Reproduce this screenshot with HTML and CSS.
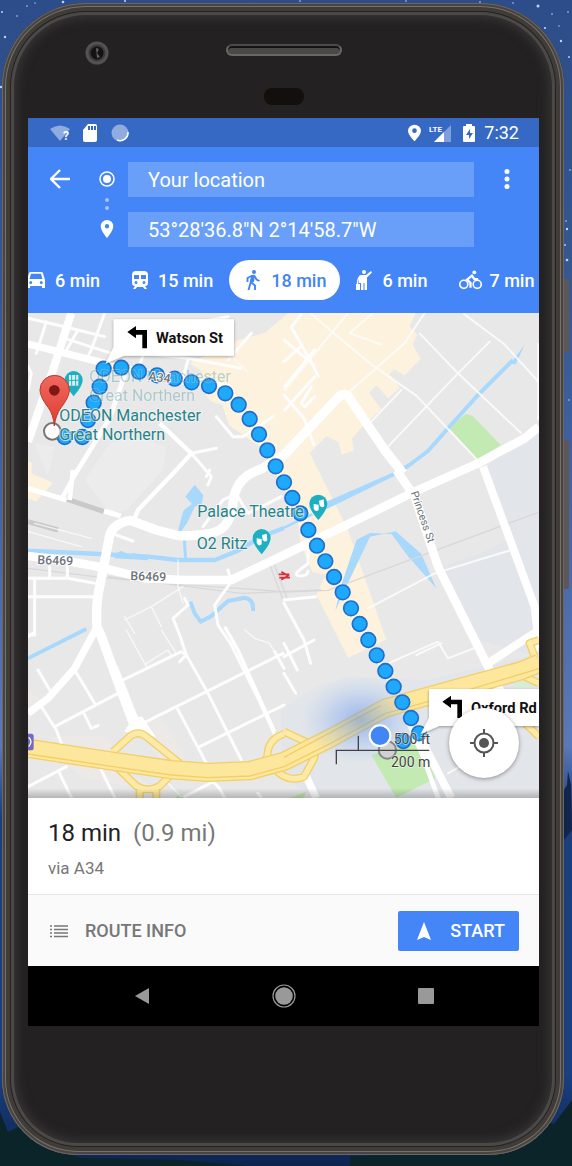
FILE: index.html
```html
<!DOCTYPE html>
<html lang="en">
<head>
<meta charset="utf-8">
<meta name="viewport" content="width=device-width, initial-scale=1">
<title>Directions</title>
<link rel="stylesheet" href="styles.css">
</head>
<body>
<div class="desktop">
  <svg class="stars" viewBox="0 0 572 1166" preserveAspectRatio="none" aria-hidden="true">
    <g fill="#c3d4f5">
      <circle cx="63" cy="2" r="1.3"/><circle cx="5" cy="37" r="1.2"/><circle cx="2" cy="12" r="1"/><circle cx="17" cy="16" r=".8"/><circle cx="1" cy="87" r="1.2"/><circle cx="27" cy="6" r=".8"/><circle cx="35" cy="3" r=".7"/><circle cx="125" cy="1" r="1"/><circle cx="300" cy="1" r=".8"/><circle cx="406" cy="1" r=".8"/><circle cx="480" cy="2" r=".8"/><circle cx="538" cy="6" r="1.5"/><circle cx="513" cy="3" r=".8"/><circle cx="545" cy="28" r="1.1"/><circle cx="552" cy="14" r=".8"/><circle cx="561" cy="41" r="1.2"/><circle cx="568" cy="12" r=".8"/><circle cx="559" cy="26" r=".7"/><circle cx="569" cy="57" r=".9"/><circle cx="567" cy="229" r="1.2"/><circle cx="567" cy="260" r="1.3"/><circle cx="566" cy="221" r=".8"/><circle cx="565" cy="245" r=".9"/><circle cx="570" cy="170" r=".8"/><circle cx="569" cy="400" r=".8"/>
    </g>
    <path d="M564 790l3-5 1-14 3 14 1 45-8 10z" fill="#12264c"/>
    <path d="M0 1112l8 20 12-6 20 18 40 14 100 2 70 6H0zM350 1156l120-2 50-18 20-16 14 4 18-24v66H350z" fill="#0b2429"/>
  </svg>
  <i class="key key-power"></i><i class="key key-volume"></i>
  <div class="phone">
    <div class="hardware" aria-hidden="true">
      <svg class="lens" viewBox="0 0 24 24"><circle cx="12" cy="12" r="11.5" fill="#555352"/><circle cx="12" cy="12" r="8.5" fill="#3b3939"/><circle cx="12" cy="12" r="6.5" fill="#141313"/><path d="M11 7l3 1-2 4 3 4-3 1z" fill="#646261"/></svg>
      <span class="speaker"></span>
      <span class="sensor"></span>
    </div>
    <main class="screen">
      <div class="status">
        <svg class="s-wifi" viewBox="0 0 22 18"><path d="M0 5Q10-2 20 5L10 17z" fill="#8fabdf"/><text x="13" y="16" class="q">?</text></svg>
        <svg class="s-sd" viewBox="0 0 14 18"><path d="M5 0h7q2 0 2 2v14q0 2-2 2H2q-2 0-2-2V6z" fill="#fff"/><path d="M5 2h2v4H5zm3 0h2v4H8zm3 0h2v4h-2z" fill="#3669c4"/></svg>
        <svg class="s-sync" viewBox="0 0 18 18"><circle cx="9" cy="9" r="8.5" fill="#8fabdf"/><path d="M17 8a8 8 0 0 1-11 8" fill="none" stroke="#fff" stroke-width="1.500"/></svg>
        <span class="fill"></span>
        <svg class="s-pin" viewBox="0 0 14 18"><path fill-rule="evenodd" d="M7 0a7 6.600 0 0 1 7 6.600C14 11 7 18 7 18S0 11 0 6.600A7 6.600 0 0 1 7 0zm0 4a2.500 2.500 0 1 0 0 5 2.500 2.500 0 0 0 0-5z" fill="#fff"/></svg>
        <svg class="s-lte" viewBox="0 0 23 18"><path d="M22 1v17H5z" fill="#7f9edb"/><path d="M15 8v10H5z" fill="#fff"/><text x="0" y="8" class="lte">LTE</text></svg>
        <svg class="s-bat" viewBox="0 0 12 18"><path d="M3 0h6v2h2q1 0 1 1v14q0 1-1 1H1q-1 0-1-1V3q0-1 1-1h2z" fill="#fff"/><path d="M7 5l-4 6h3v4l4-6H7z" fill="#3669c4"/></svg>
        <time>7:32</time>
      </div>
      <header class="header">
        <form class="route">
          <button type="button" class="icon-btn back" aria-label="Back"><svg viewBox="0 0 20 20"><path d="M10 1L1 10l9 9M1.500 10H20" fill="none" stroke="#fff" stroke-width="2.400"/></svg></button>
          <svg class="trail" viewBox="0 0 16 84" aria-hidden="true"><circle cx="8" cy="17" r="7" fill="none" stroke="#fff" stroke-width="1.500"/><circle cx="8" cy="17" r="4" fill="#fff"/><circle cx="8" cy="38" r="2" fill="#a5c5fb"/><circle cx="8" cy="46" r="2" fill="#a5c5fb"/><path fill-rule="evenodd" d="M8 58a6.300 6.300 0 0 1 6.300 6.300C14.300 69 8 76 8 76S1.700 69 1.700 64.300A6.300 6.300 0 0 1 8 58zm0 4a2.200 2.200 0 1 0 0 4.400A2.200 2.200 0 0 0 8 62z" fill="#fff"/></svg>
          <div class="fields">
            <input type="text" aria-label="Starting point" value="Your location">
            <input type="text" aria-label="Destination" value="53°28'36.8&quot;N 2°14'58.7&quot;W">
          </div>
          <button type="button" class="icon-btn more" aria-label="More options"><svg viewBox="0 0 20 20"><g fill="#fff"><circle cx="10" cy="2.500" r="2.500"/><circle cx="10" cy="10" r="2.500"/><circle cx="10" cy="17.500" r="2.500"/></g></svg></button>
        </form>
        <nav class="modes" aria-label="Travel modes">
          <button type="button"><svg class="m-car" viewBox="0 0 18 16"><path fill-rule="evenodd" d="M3.500 0h11q1 0 1.500 1.200L18 8v8h-3v-2H3v2H0V8l2-6.800Q2.500 0 3.500 0zM4 1.700L2.500 7h13L14 1.700zM3.700 9a1.500 1.500 0 1 0 0 3 1.500 1.500 0 0 0 0-3zm10.600 0a1.500 1.500 0 1 0 0 3 1.500 1.500 0 0 0 0-3z" fill="currentColor"/></svg>6 min</button>
          <button type="button"><svg class="m-train" viewBox="0 0 16 18"><path fill-rule="evenodd" d="M4 0h8q4 0 4 4v8q0 3-3 3l2 3h-2.500l-1.500-2H5l-1.500 2H1l2-3q-3 0-3-3V4q0-4 4-4zM2 4v4h5V4zm7 0v4h5V4zM4 10a1.500 1.500 0 1 0 0 3 1.500 1.500 0 0 0 0-3zm8 0a1.500 1.500 0 1 0 0 3 1.500 1.500 0 0 0 0-3z" fill="currentColor"/></svg>15 min</button>
          <button type="button" class="on" aria-pressed="true"><svg class="m-walk" viewBox="0 0 16 21"><circle cx="9" cy="2" r="2" fill="currentColor"/><path d="M7.500 5.500L2.500 8v4M7.500 5.500L5.500 13 3.500 20M6.500 12.500l3.500 3V20M9.500 6l2 3.500 3 1.500" fill="none" stroke="currentColor" stroke-width="1.900"/><path d="M6.500 5l3.500-.3-1 7.300H5z" fill="currentColor"/></svg>18 min</button>
          <button type="button"><svg class="m-hail" viewBox="0 0 16 21"><circle cx="8" cy="2" r="2" fill="currentColor"/><path d="M3 6q1-1 3-1h4l5-4 1 1.500-5 5V20H8.500v-7h-1v7H5v-7H3z" fill="currentColor"/><path d="M0 14h4v6H0z" fill="currentColor"/><path d="M1.500 14q0-6 3-8" fill="none" stroke="currentColor" stroke-width="1.500"/></svg>6 min</button>
          <button type="button"><svg class="m-bike" viewBox="0 0 24 20"><g fill="none" stroke="currentColor" stroke-width="1.700"><circle cx="5" cy="14.500" r="4.200"/><circle cx="19" cy="14.500" r="4.200"/><path d="M12 18v-5L8.500 9.500l5-4L16 9h4" stroke-width="2.400"/></g><circle cx="16" cy="2" r="2" fill="currentColor"/></svg>7 min</button>
        </nav>
      </header>
      <section class="map" aria-label="Map">
        <svg class="canvas" viewBox="0 9 1533 1455">
          <defs>
            <radialGradient id="glow"><stop offset="0" stop-color="#4a83f0" stop-opacity=".5"/><stop offset=".5" stop-color="#6f9cf0" stop-opacity=".28"/><stop offset="1" stop-color="#8ab0f5" stop-opacity="0"/></radialGradient>
            <linearGradient id="pinfill" x2="0" y2="1"><stop offset="0" stop-color="#f0695f"/><stop offset="1" stop-color="#dd3d31"/></linearGradient>
            <linearGradient id="edge" x2="0" y2="1"><stop offset="0" stop-opacity="0"/><stop offset="1" stop-opacity=".22"/></linearGradient>
            <filter id="soft" x="-10%" y="-20%" width="120%" height="150%"><feDropShadow dx="0" dy="3" stdDeviation="4" flood-opacity=".35"/></filter>
          </defs>
          <rect y="9" width="1533" height="1455" fill="#e8e8e8"/>
          <path d="M1370 480L1440 395 1533 370V1040L1350 990 1230 775 1380 720 1440 690zM865 1130L960 1100 1200 1110 1533 1030V1464H865L760 1400V1200z" fill="#e2e6ea"/>
          <path d="M170 510l75-110 80-20 90 30-10 70-110 120-50 10zM20 400l60 10-20 90z" fill="#ececec"/>
          <path d="M0 1140l40 30-40 30zM60 1280l170 0 60 60-110 10zM350 1240l50-20 70 110 0 60-60 0zM100 1350l200 40 120 60-60-10-200-40z" fill="#ece9e7"/>
          <g fill="#fcf2dd">
            <path d="M868 9h295l-18 40 23 25-14 30 24 42-48 50-32-18-13 15 30 40-35 32-35-40-22 23 37 50-60 55-28 32 5 37-37 12-8-37-37-18-50 50 20 40 95 190 40 115 75 215-115 55-95-190 28-60-40-8-35-85-15-115-70-150-130-90-20-62-34-10-48-60 23-28-40-27 150-70 75-20 78-65z"/>
            <path d="M0 455l12 3-2 32 65 28-50 57-25-10z"/>
          </g>
          <g fill="#c2eab2">
            <path d="M1265 355l48-43 20 5 85 88-68 45z"/><path d="M1030 1335l145-45 47 115-117 59z"/><path d="M786 1464l48-19-6 19zM440 1464l18-12 8 12z"/><path d="M1455 1118l78-16v25l-70 12z" fill="#d9ecd8"/>
          </g>
          <g fill="none" stroke="#a8d8fc" stroke-linejoin="round">
            <path d="M0 722l215 10 145 8 90 10h110l70-28 70-42 68-26" stroke-width="13"/><path d="M768 653l85-40" stroke-width="8"/>
            <path d="M1095 493l45-25 60-45 60-68 90-100 105-105" stroke-width="12"/>
            <path d="M469 690l4 60" stroke-width="9"/><path d="M487 875l13 35 18 25 32-17 50-45 50-10q28 4 25 40" stroke-width="12"/><path d="M0 1045l175-88" stroke-width="11"/>
          </g>
          <g fill="#a8d8fc">
            <path d="M1448 160l42-56-28 60z"/><path d="M895 575l210-92v12L895 598z"/><path d="M260 745v-14l20-8 25 12 10-6 45 8v14z"/>
            <path d="M472 560l28-36 26 32-4 24-22 10-22 48-20 28-8-4 16-60 26-20z"/>
            <path d="M922 902l28-62 76-160 77-16 77 68 45 103-85-96-50-68-64-2-40 20-44 130z"/>
          </g>
          <g fill="none" stroke="#d8d8d8" stroke-width="4"><path d="M0 775l200 25 200 20 300 20 70 6 130-5 633-235M240 800l400 50 240-10M720 750l45 120M732 745l45 120"/><path d="M118 568l110 37M0 635l90 25" stroke="#c9c9c9" stroke-width="15"/></g>
          <g fill="none" stroke="#fdfdfd" stroke-linecap="round" stroke-linejoin="round">
            <g stroke-width="4" opacity=".75"><path d="M450 750v80l15 50M465 830l-95 60-80 40M370 890l30 60M290 920l30 50M295 960l60 110M400 960l45 70M355 1080v-20l65-40 10 20M650 960l30 25 45 15 20 35M0 665l160 45M20 640l170 45M230 790l-10 60M420 1420l40 40M600 130l60 55"/></g>
            <g stroke-width="6" opacity=".85"><path d="M1035 9l-70 60 95 35M850 12l70 60 115 95 130 90 190 200M1175 70l115 120 190 180M1308 12l120 90 105 115M1385 95l-95 95-210 220M1120 240l-90 95M960 9L770 240M1190 9l-60 90-170 150M1020 895l200-105 230-70M1240 1000l-75 35M1080 1060l150-65 30 50 90-35M1260 1390l60-35"/></g>
            <g stroke-width="9"><path d="M0 25l110 25 120 30M55 35L25 130M230 9l-40 110-10 20M110 85l140 45M350 130l130 15 160 30M350 120l-20 60M150 60l-40 70M0 170l10 20-10 50M480 150l-20 70M600 150l70-80M500 40l100-20M820 12l-30 40 60 105 20 40M768 90l90 75M860 120l-90 110M860 200l-90 100M768 155l50-45M768 255l60 70 30 80M860 260l-30 30-10-10 30-50"/><path d="M565 320l50 60h30l90-60M490 430l60 70-10 25M490 430l75-15M0 805h120l80 15M20 805v170H0M0 860h200M65 770v35M118 770v35M265 675l50 18M545 480l-10 20M525 650l60-80 40-20M630 560l30 50 100-50M470 865l10 20-45 40 20 50 20 60-20 20M610 815l-50 70 10 60 40 60 80 160 50 110M600 780l8 30M768 870l95-10M768 880l60 110 20 70M840 700v60l-25 20q-20 15 0 18 25 0 25-15"/></g>
            <g stroke-width="9"><path d="M275 1115l185-90 15 10 65 115 100 200M80 1250l190-100M355 1235l410-205M445 1190l90 170M515 1310l253-125M740 1025l28 50M30 1080l35 60M140 1080l60 100M40 1190l45 70 15 40M165 1205l25 50 20-8M0 1430l115-60M95 1390l35 72M220 1380l40 82M470 1460l85-45 20 20 15 30M690 1450l10 14M768 1000l40 80M768 1090l35 60M768 1040l90-50M0 980l15-10"/></g>
          </g>
          <g fill="none" stroke="#fff" stroke-linejoin="round">
            <path d="M130 9L75 180 0 395" stroke-width="24"/><path d="M0 102l240 60 360 68 80 130 170 310 250 470 85 200 70 190" stroke-width="14"/><path d="M290 195l-45 130-105 170-38 70M135 480l-10 90" stroke-width="14"/><path d="M0 102l240 60" stroke-width="22"/><path d="M395 340l95 90-45 50-115 120-10 25" stroke-width="13"/><path d="M0 535l115 35M228 603l50 15" stroke-width="15"/>
            <path d="M0 738l100 12 100 18 150 37 120 5h140l158-75 177-85 215-105 190-85 140-75 43-35" stroke-width="26"/>
            <path d="M1125 490l-55-70-110-162q-15-10-30 5L768 435l-68 42q-65 20-80 75l-8 45q-10 60-60 72-60 10-100 8l-70-18-75-28q-60 10-65 60l-25 130q-15 60-10 130l12 25 56 155 55 145" stroke-width="28"/>
            <path d="M1105 480l55 80 70 210 210 420" stroke-width="26"/><path d="M1365 470l155 420 8 75-10 60" stroke-width="24"/><path d="M1380 1060l153-100" stroke-width="24"/><path d="M205 955l-65 120-80 90-60 45" stroke-width="22"/><path d="M1533 100v230" stroke-width="10"/>
            <path d="M255 1070l75 190" stroke-width="28"/><path d="M1170 1270l100 194" stroke-width="24"/><path d="M740 1265l-110-245-40-70" stroke-width="10"/>
            <path d="M835 1400l30 64" stroke-width="22"/>
          </g>
          <path d="M288 1265l30-45 25 0 40 60z" fill="#fff"/>
          <g fill="none" stroke-linejoin="round">
            <g stroke="#f2cf69" stroke-width="24"><path id="ramps" d="M255 1325l50-45q25-20 50 0l100 80M265 1370l60 58q35 20 70 0l35-35M335 1440v30M385 1440v30M768 1272q-50 15-50 70l-30 30M768 1265l75 35q30 20 10 55l-25 45q-50 20-90-25M1400 1110l133-60M1520 1040l-15-40 28-10M1470 1090l63 30M1440 1190l93 90"/></g>
            <use href="#ramps" stroke="#fdeaa6" stroke-width="16"/>
            <path d="M0 1315l250 38 180 26 110 8 125-5 103-28 140-70 165-90 180-50 227-62 53-22" stroke="#f2cf69" stroke-width="58"/>
            <path d="M0 1315l250 38 180 26 110 8 125-5 103-28 140-70 165-90 180-50 227-62 53-22" stroke="#fde79c" stroke-width="50"/>
            <path d="M0 1332l250 37 180 26 110 8 125-5 103-28 140-70 165-90 180-50 280-84M768 1342l290-155" stroke="#f2cf69" stroke-width="4"/>
          </g>
          <path d="M0 1271h10q7 0 7 8v34q0 8-7 8H0z" fill="#7568c0"/><path d="M2 1282q14 13 0 28" fill="none" stroke="#fff" stroke-width="4"/>
          <ellipse cx="1000" cy="1230" rx="180" ry="130" fill="url(#glow)"/>
          <g class="dots">
            <circle cx="110" cy="381" r="22"/><circle cx="163" cy="381" r="22"/><circle cx="180" cy="330" r="22"/><circle cx="197" cy="278" r="22"/><circle cx="215" cy="230" r="22"/><circle cx="227" cy="176" r="22"/><circle cx="280" cy="173" r="22"/><circle cx="333" cy="185" r="22"/><circle cx="387" cy="196" r="22"/><circle cx="440" cy="206" r="22"/><circle cx="491" cy="217" r="22"/><circle cx="543" cy="228" r="22"/><circle cx="592" cy="250" r="22"/><circle cx="632" cy="284" r="22"/><circle cx="665" cy="327" r="22"/><circle cx="693" cy="373" r="22"/><circle cx="718" cy="421" r="22"/><circle cx="743" cy="469" r="22"/><circle cx="768" cy="517" r="22"/><circle cx="793" cy="564" r="22"/><circle cx="817" cy="610" r="22"/><circle cx="841" cy="660" r="22"/><circle cx="867" cy="707" r="22"/><circle cx="892" cy="754" r="22"/><circle cx="918" cy="801" r="22"/><circle cx="944" cy="847" r="22"/><circle cx="969" cy="895" r="22"/><circle cx="995" cy="942" r="22"/><circle cx="1021" cy="990" r="22"/><circle cx="1046" cy="1036" r="22"/><circle cx="1072" cy="1083" r="22"/><circle cx="1097" cy="1130" r="22"/><circle cx="1123" cy="1177" r="22"/><circle cx="1149" cy="1224" r="22"/><circle cx="1173" cy="1270" r="22"/><circle cx="1126" cy="1293" r="22"/>
          </g>
          <g class="place faded"><text x="184" y="216">ODEON Manchester</text><text x="184" y="272">Great Northern</text></g>
          <text class="road" x="360" y="210" transform="rotate(8 360 210)">A34</text>
          <text class="road" x="28" y="762" transform="rotate(2 28 762)">B6469</text><text class="road" x="307" y="810" transform="rotate(2 307 810)">B6469</text>
          <text class="road lane" x="1148" y="548" transform="rotate(71 1148 548)">Princess St</text>
          <g fill="#1cb0c2"><path id="poi" d="M137 183a27 27 0 0 1 27 27q0 18-27 49-27-31-27-49a27 27 0 0 1 27-27z"/><use href="#poi" x="564" y="474"/><use href="#poi" x="734" y="371"/></g>
          <path d="M123 195h28v32h-28z" fill="#d9f4f6"/><path d="M131 195v32M143 195v32M123 211h28" stroke="#1cb0c2" stroke-width="3"/>
          <g id="masks" fill="#fff"><path d="M702 675l14-4 2 20q-8 8-14-2zM686 685l15 2 0 16q-9 8-15-4z"/></g><use href="#masks" x="171" y="-103"/>
          <circle cx="73" cy="364" r="25" fill="#fff" stroke="#777" stroke-width="6"/>
          <path d="M79 348q-3-35-18-55-25-32-25-53a43 43 0 0 1 88 0q0 21-25 53-17 24-20 55z" fill="url(#pinfill)" stroke="#c3362d" stroke-width="3"/><circle cx="79" cy="241" r="16" fill="#7f1812"/>
          <g class="place"><text x="94" y="333">ODEON Manchester</text><text x="94" y="390">Great Northern</text><text x="508" y="621">Palace Theatre</text><text x="506" y="717">O2 Ritz</text></g>
          <path d="M752 793h32M754 803h32M760 785l20 12-20 12" fill="none" stroke="#e22c35" stroke-width="5"/>
          <path d="M257 28h361v109H288l-56 24 25-50z" fill="#fff" filter="url(#soft)"/>
          <path id="turn" d="M298 66l26-18v12h33v55h-14V74h-19v11z"/><text class="street" x="384" y="98">Watson St</text>
          <path d="M1203 1137h330v111h-300l-55 24 25-48z" fill="#fff" filter="url(#soft)"/>
          <use href="#turn" x="945" y="1109"/>
          <path d="M1243 1175l26-18v12h33v55h-14v-41h-19v11z" fill="none"/><use href="#turn" x="178" y="150" display="none"/>
          <text class="street" x="1329" y="1208">Oxford Rd</text>
          <circle cx="1078" cy="1320" r="26" fill="#d1d1d1" stroke="#858585" stroke-width="6"/><circle cx="1056" cy="1277" r="31" fill="#4285f4" stroke="#fff" stroke-width="6"/>
          <path d="M925 1363v-42h279M991 1321v-44" fill="none" stroke="#444" stroke-width="4"/>
          <g class="scale"><text x="1097" y="1302">500 ft</text><text x="1089" y="1371">200 m</text></g>
          <rect y="1435" width="1533" height="29" fill="url(#edge)"/>
        </svg>
        <button type="button" class="locate" aria-label="Show my location"><svg viewBox="0 0 28 28"><circle cx="14" cy="14" r="9.500" fill="none" stroke="#555" stroke-width="2"/><circle cx="14" cy="14" r="5" fill="#555"/><path d="M14 0v5M14 23v5M0 14h5M23 14h5" stroke="#555" stroke-width="2"/></svg></button>
      </section>
      <section class="summary">
        <h1>18 min <span>(0.9 mi)</span></h1>
        <p>via A34</p>
      </section>
      <footer class="actions">
        <button type="button" class="info"><svg viewBox="0 0 18 14"><path d="M0 2h2M0 5.500h2M0 9h2M0 12.500h2M4 2h14M4 5.500h14M4 9h14M4 12.500h14" stroke="#777" stroke-width="1.500"/></svg>ROUTE INFO</button>
        <button type="button" class="start"><svg viewBox="0 0 16 18"><path d="M8 0l7 18-7-3-7 3z" fill="#fff"/></svg>START</button>
      </footer>
      <nav class="system" aria-label="System">
        <button type="button" aria-label="Back"><svg viewBox="0 0 24 24"><path d="M5 12l14-8v16z" fill="#999"/></svg></button>
        <button type="button" aria-label="Home"><svg viewBox="0 0 24 24"><circle cx="12" cy="12" r="11" fill="none" stroke="#999" stroke-width="1.200"/><circle cx="12" cy="12" r="8.800" fill="#999"/></svg></button>
        <button type="button" aria-label="Recent apps"><svg viewBox="0 0 24 24"><rect x="4" y="4" width="16" height="16" rx="1" fill="#999"/></svg></button>
      </nav>
    </main>
  </div>
</div>
</body>
</html>
```
FILE: styles.css
```css
* { box-sizing: border-box; }
body { margin: 0; font-family: Roboto, "Liberation Sans", sans-serif; }
button { border: 0; padding: 0; background: none; font: inherit; color: inherit; cursor: pointer; }
svg { display: block; flex: none; }

.desktop {
  position: relative;
  min-height: 100vh;
  padding: 3px 8px 11px 2px;
  overflow: hidden;
  background: linear-gradient(#2d4d8a 0%, #35558f 20%, #41619f 40%, #5b78b8 64%, #1b3e7c 70%, #1c3f80 92%, #0c2450 100%);
}
.stars { position: absolute; inset: 0; width: 100%; height: 100%; }
.key { position: absolute; right: 3px; width: 6px; border-radius: 2px; background: #5d5857; }
.key-power { top: 279px; height: 73px; }
.key-volume { top: 440px; height: 149px; }

.phone {
  position: relative;
  padding: 0 25px 129px 26px;
  border-radius: 84px 84px 76px 76px;
  background: #232122;
  box-shadow:
    inset 0 0 0 1px #6b6663,
    inset 0 0 0 3px #484441,
    inset 0 0 0 4px #77716d,
    inset 0 0 0 8px #403c38,
    inset 0 0 0 9px #24211f,
    inset 0 0 0 12px #4b4947,
    inset 0 0 12px 14px #3b3938;
}
.hardware { display: grid; grid-template-columns: 1fr 116px 1fr; grid-template-rows: 36px 38px; height: 115px; padding-top: 38px; }
.lens { width: 24px; height: 24px; margin-left: 57px; }
.speaker { height: 12px; margin-top: 3px; border: 2px solid #6a6867; border-top-color: #4c4a49; border-radius: 6px; background: #4b4948; box-shadow: inset 0 2px #151414; }
.sensor { grid-column: 2; justify-self: center; width: 40px; height: 17px; margin-top: 11px; border-radius: 8px; background: #120f0c; }

.screen { display: flex; flex-direction: column; background: #fff; overflow: hidden; }
.status { display: flex; align-items: center; height: 29px; padding: 0 20px 0 22px; background: #3669c4; color: #fff; font-size: 18px; line-height: 29px; }
.status .fill { flex: 1; }
.status time { margin-left: 9px; }
.s-wifi { width: 22px; height: 18px; }
.s-sd { width: 14px; height: 18px; margin-left: 11px; }
.s-sync { width: 18px; height: 18px; margin-left: 14px; }
.s-pin { width: 13px; height: 18px; }
.s-lte { width: 23px; height: 18px; margin-left: 8px; }
.s-bat { width: 12px; height: 18px; margin-left: 11px; }
.q { font: 700 12px Roboto, sans-serif; fill: #fff; }
.lte { font: 700 8px Roboto, sans-serif; fill: #fff; }

.header { background: #4486f7; color: #fff; height: 166px; padding-top: 15px; overflow: hidden; }
.route { display: flex; align-items: flex-start; padding: 0 22px; }
.icon-btn { display: grid; place-items: center; width: 20px; height: 34px; }
.icon-btn svg { width: 20px; height: 20px; }
.trail { width: 16px; height: 84px; margin: 0 13px 0 29px; }
.fields { flex: 1; display: grid; gap: 15px; margin-right: 23px; }
.fields input { width: 100%; min-width: 0; height: 35px; padding: 0 20px; border: 0; border-radius: 0; background: #699ff8; color: #fff; font: 20px Roboto, sans-serif; }
.modes { display: flex; margin: 13px 0 0 -17px; }
.modes button { display: flex; flex: none; align-items: center; gap: 10px; height: 40px; padding: 0 16px; border-radius: 20px; font-size: 18px; font-weight: 500; white-space: nowrap; }
.modes .on { padding-right: 14px; background: #fff; color: #4285f4; }
.modes button:last-child { gap: 7px; padding-right: 0; }
.m-car { width: 18px; height: 16px; }
.m-train { width: 16px; height: 18px; }
.m-walk { width: 16px; height: 21px; }
.m-hail { width: 16px; height: 21px; }
.m-bike { width: 23px; height: 20px; }

.map { position: relative; }
.canvas { width: 100%; height: auto; }
.dots { fill: #1fa9fd; stroke: #1f6ecb; stroke-width: 5px; }
.place { font: 400 48px Roboto, sans-serif; fill: #278389; stroke: #f4f7f7; stroke-width: 6px; stroke-opacity: .7; paint-order: stroke; }
.faded { opacity: .3; }
.road { font: 500 37px Roboto, sans-serif; fill: #6c737b; stroke: #fff; stroke-width: 5px; paint-order: stroke; }
.lane { font-size: 32px; font-weight: 400; }
.street { font: 700 44px Roboto, sans-serif; fill: #111; }
.scale { font: 400 42px Roboto, sans-serif; fill: #444; stroke: #fff; stroke-width: 4px; stroke-opacity: .6; paint-order: stroke; }
.locate { position: absolute; right: 20px; bottom: 20px; display: grid; place-items: center; width: 70px; height: 70px; border-radius: 50%; background: #fff; box-shadow: 0 1px 4px rgba(0, 0, 0, .4); }
.locate svg { width: 28px; height: 28px; }

.summary { height: 97px; padding: 20px; border-bottom: 1px solid #e6e6e6; }
.summary h1 { margin: 0; font-size: 24px; line-height: 30px; font-weight: 400; color: #222; }
.summary h1 span { margin-left: 6px; color: #777; }
.summary p { margin: 10px 0 0; font-size: 17px; line-height: 20px; color: #777; }
.actions { display: flex; align-items: center; justify-content: space-between; height: 71px; padding: 0 20px 0 22px; background: #fafafa; font-size: 18px; font-weight: 500; }
.info { display: flex; align-items: center; gap: 17px; color: #777; }
.info svg { width: 18px; height: 14px; }
.start { display: flex; align-items: center; gap: 18px; height: 40px; padding: 0 14px 0 18px; border-radius: 2px; background: #4486f7; color: #fff; }
.start svg { width: 16px; height: 18px; }
.system { display: flex; justify-content: center; gap: 118px; height: 60px; background: #000; }
.system button { display: grid; place-items: center; width: 24px; }
.system svg { width: 24px; height: 24px; }
```
